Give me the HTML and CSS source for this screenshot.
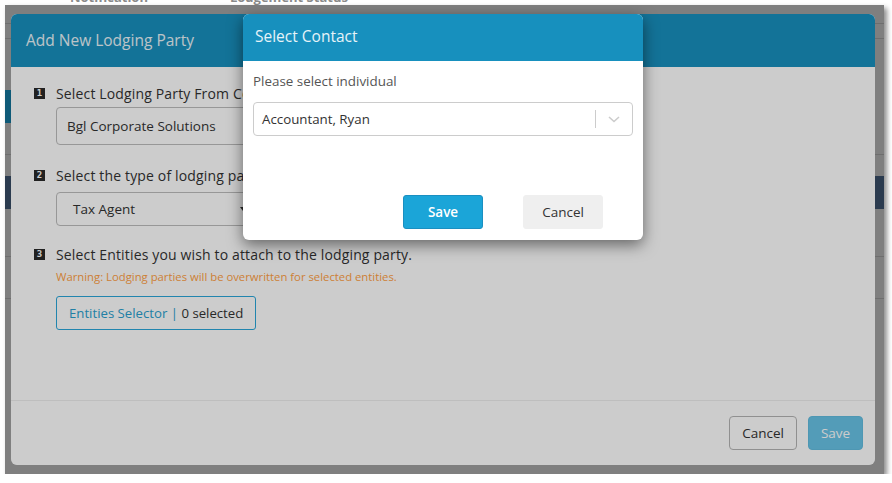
FILE: index.html
```html
<!DOCTYPE html>
<html>
<head>
<meta charset="utf-8">
<link rel="stylesheet" href="styles.css">
</head>
<body>
<div class="topcut"><span class="tc1">Notification</span><span class="tc2">Lodgement Status</span></div>
<div class="screen">
  <div class="page">
    <div class="pg-nav"></div>
    <div class="pg-sub"></div>
    <div class="pg-gap"></div>
    <div class="pg-tabs"><span class="pg-tab">Lodging</span></div>
    <div class="pg-row r1"></div>
    <div class="pg-band"></div>
    <div class="pg-row r2"></div>
    <div class="pg-row r3"></div>
  </div>
  <div class="backdrop"></div>

  <div class="modal outer">
    <div class="m-head"><h4 class="m-title">Add New Lodging Party</h4></div>
    <div class="m-body">
      <div class="step s1">
        <div class="step-label"><span class="badge">1</span>Select Lodging Party From Contacts</div>
        <div class="field input">Bgl Corporate Solutions</div>
      </div>
      <div class="step s2">
        <div class="step-label"><span class="badge">2</span>Select the type of lodging party</div>
        <div class="field select">Tax Agent<span class="caret"></span></div>
      </div>
      <div class="step s3">
        <div class="step-label"><span class="badge">3</span>Select Entities you wish to attach to the lodging party.</div>
        <div class="warn">Warning: Lodging parties will be overwritten for selected entities.</div>
        <button class="btn-entities"><span class="ent-link">Entities Selector |</span> 0 selected</button>
      </div>
    </div>
    <div class="m-foot">
      <button class="btn btn-cancel">Cancel</button>
      <button class="btn btn-save-dis">Save</button>
    </div>
    <div class="dim"></div>
  </div>

  <div class="modal inner">
    <div class="i-head"><h4 class="i-title">Select Contact</h4></div>
    <div class="i-body">
      <div class="i-label">Please select individual</div>
      <div class="rs">
        <span class="rs-value">Accountant, Ryan</span>
        <span class="rs-sep"></span>
        <span class="rs-arrow"><svg width="14" height="14" viewBox="0 0 14 14"><path d="M2 5 L7 9.5 L12 5" fill="none" stroke="#cccccc" stroke-width="1.6"/></svg></span>
      </div>
    </div>
    <div class="i-foot">
      <button class="btn2 btn-save">Save</button>
      <button class="btn2 btn-cancel2">Cancel</button>
    </div>
  </div>
</div>
</body>
</html>
```

FILE: styles.css
```css
* { box-sizing: border-box; }
html, body { margin: 0; padding: 0; background: #ffffff; }
body { font-family: "Open Sans", "Liberation Sans", sans-serif; color: #333333; }

.topcut {
  height: 5px;
  overflow: hidden;
  display: flex;
  font-size: 13px;
  font-weight: 700;
  color: #8a8a8a;
  line-height: 14px;
}
.topcut span { margin-top: -10px; }
.tc1 { margin-left: 70px; }
.tc2 { margin-left: 82px; }

.screen {
  position: relative;
  margin-left: 5px;
  width: 879px;
  height: 469px;
  overflow: hidden;
  box-shadow: 3px 3px 5px rgba(0,0,0,0.45);
}

/* background page */
.page { background: #ffffff; height: 100%; }
.pg-nav { height: 19px; border-bottom: 1px solid #dcdcdc; }
.pg-sub { height: 15px; border-bottom: 1px solid #dcdcdc; }
.pg-gap { height: 51px; }
.pg-tabs { height: 33px; }
.pg-tab {
  display: inline-block;
  width: 60px; height: 33px;
  background: #1db2ef;
  color: #ffffff;
  font-size: 13px;
  line-height: 33px;
  text-align: right;
  direction: rtl;
  overflow: hidden;
}
.pg-row { border-bottom: 1px solid #dcdcdc; }
.r1 { height: 32px; }
.pg-band { height: 33px; margin-top: 21px; background: #57779f; }
.r2 { height: 48px; }
.r3 { height: 42px; }

.backdrop {
  position: absolute; inset: 0;
  background: rgba(0,0,0,0.5);
}

/* modals */
.modal {
  position: absolute;
  background: #ffffff;
  border-radius: 6px;
  overflow: hidden;
  display: flex;
  flex-direction: column;
}
.outer { left: 6px; top: 9px; width: 864px; height: 451px; }

.m-head {
  height: 53px;
  background: #1890be;
  padding: 0 15px;
  display: flex; align-items: center;
}
.m-title { margin: 0; font-size: 15.5px; font-weight: 400; color: #eaf5fa; padding-bottom: 2px; }

.m-body { flex: 1; padding: 19px 23px 0; border-bottom: 1px solid #eeeeee; }
.step-label {
  display: flex; align-items: center;
  font-size: 14px; color: #333333;
  letter-spacing: 0.15px;
  height: 14px;
}
.badge {
  width: 11px; height: 11px;
  background: #2a2a2a; color: #ffffff;
  font-size: 9px; font-weight: 700; line-height: 11px;
  letter-spacing: 0;
  text-align: center;
  margin-right: 11px;
  font-family: "DejaVu Sans Mono", monospace;
}
.field {
  margin-left: 22px;
  border: 1px solid #bdbdbd;
  border-radius: 4px;
  font-size: 13.5px; color: #333333;
  display: flex; align-items: center;
}
.input { margin-top: 7px; height: 38px; width: 400px; padding-left: 10px; }
.select { margin-top: 10px; height: 34px; width: 400px; padding-left: 16px; position: relative; }
.caret {
  position: absolute; left: 183px; top: 14px;
  width: 0; height: 0;
  border-left: 3px solid transparent; border-right: 3px solid transparent;
  border-top: 4px solid #333333;
}
.s2 { margin-top: 23px; }
.s3 { margin-top: 21px; }
.warn { margin: 8px 0 0 22px; font-size: 11.3px; color: #ff9f45; }
.btn-entities {
  margin: 12px 0 0 22px;
  height: 34px; width: 200px;
  background: #ffffff;
  border: 1px solid #2aa7da;
  border-radius: 3px;
  font-family: inherit; font-size: 13.2px; color: #333333;
  padding: 0 10px 0 12px;
  text-align: left;
  white-space: nowrap;
}
.ent-link { color: #2a9fcf; }

.m-foot {
  height: 64px;
  display: flex; justify-content: flex-end; align-items: flex-start;
  gap: 11px;
  padding: 15px 12px 0 0;
}
.btn {
  height: 34px;
  border-radius: 4px;
  font-family: inherit; font-size: 13.5px;
}
.btn-cancel { width: 68px; background: #ffffff; border: 1px solid #b5b5b5; color: #333333; }
.btn-save-dis { width: 55px; background: #68c4e7; border: 1px solid #62bde0; color: #ffffff; }

.dim { position: absolute; inset: 0; background: rgba(0,0,0,0.2); }

.inner {
  left: 238px; top: 9px; width: 400px; height: 226px;
  box-shadow: 0 5px 15px rgba(0,0,0,0.5);
}
.i-head {
  height: 47px;
  background: #1790be;
  padding: 0 12px;
  display: flex; align-items: center;
}
.i-title { margin: 0; font-size: 15.5px; font-weight: 400; color: #e6f3f8; padding-bottom: 3px; }
.i-body { padding: 12px 10px 0; }
.i-label { font-size: 13.4px; color: #555555; line-height: 16px; }
.rs {
  margin-top: 13px;
  height: 34px;
  border: 1px solid #cccccc;
  border-radius: 4px;
  display: flex; align-items: center;
  padding-left: 8px;
}
.rs-value { flex: 1; font-size: 13.3px; color: #333333; }
.rs-sep { width: 1px; height: 18px; background: #cccccc; }
.rs-arrow { width: 36px; display: flex; justify-content: center; align-items: center; }
.rs-arrow svg { display: block; }

.i-foot {
  margin-top: auto;
  padding: 0 40px 11px 0;
  display: flex; justify-content: flex-end; gap: 40px;
}
.btn2 {
  width: 80px; height: 34px;
  border-radius: 3px;
  font-family: inherit; font-size: 13.5px;
}
.btn-save { background: #1ba5d8; border: 1px solid #1a8fc1; color: #ffffff; font-weight: 600; }
.btn-cancel2 { background: #efefef; border: 1px solid #efefef; color: #333333; }
```
